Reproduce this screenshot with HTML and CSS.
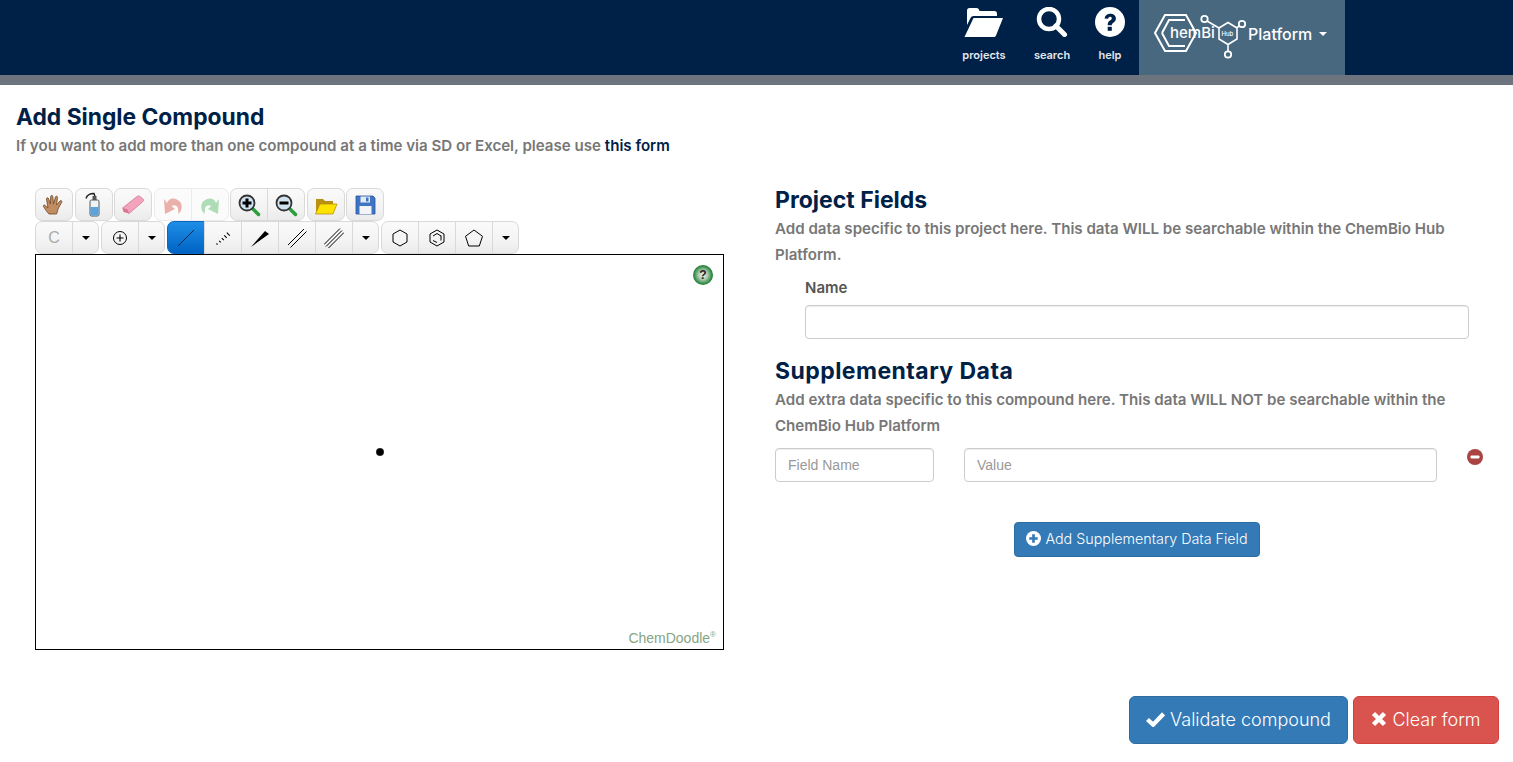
FILE: index.html
```html
<!DOCTYPE html>
<html lang="en">
<head>
  <meta charset="UTF-8">
  <title>Add Single Compound</title>
  <link rel="stylesheet" href="styles.css">
</head>
<body>
  <header class="topbar">
    <a class="nav-item nav-projects">
      <svg width="40" height="30" viewBox="0 0 40 30"><path d="M3 9V3.500C3 2 4 1 5.500 1h7c1.500 0 2.500 1 3 3h15c1.500 0 2.500 1 2.500 2.500V9H9.500C8 9 7.200 9.800 6.500 11L3 18z" fill="#fff"/><path d="M9.500 11H39l-7 17.500c-.3.800-1 1.500-2 1.500H.5z" fill="#fff"/></svg>
      <span>projects</span>
    </a>
    <a class="nav-item nav-search">
      <svg width="32" height="30" viewBox="0 0 32 30"><circle cx="13" cy="12" r="10" fill="none" stroke="#fff" stroke-width="4.500"/><path d="M20 19l8.500 8.500" stroke="#fff" stroke-width="5" stroke-linecap="round"/></svg>
      <span>search</span>
    </a>
    <a class="nav-item nav-help">
      <svg width="30" height="30" viewBox="0 0 30 30"><circle cx="15" cy="15" r="15" fill="#fff"/><path d="M9.500 11.500C10 8.500 12.300 6.800 15.300 6.800c3.200 0 5.600 2 5.600 4.800 0 2.300-1.300 3.300-2.800 4.300-1 .7-1.300 1.200-1.300 2.300h-4.100c0-2.400.7-3.600 2.300-4.700 1.200-.8 1.800-1.300 1.800-2.100 0-1-.7-1.600-1.600-1.600-1.100 0-1.800.7-2 1.900z" fill="#002147"/><rect x="12.700" y="19.800" width="4.100" height="4" fill="#002147"/></svg>
      <span>help</span>
    </a>
    <a class="platform">
      <svg class="logo" width="92" height="50" viewBox="0 0 92 50">
        <g fill="none" stroke="#fff">
          <path d="M1 21L11 3H32L42 21 32 39H11z" stroke-width="2"/>
          <path d="M8 21L15 8H31M31 34H15L8 21" stroke-width="2"/>
          <path d="M53 9L65 16M65 16l9-5.500 9 5.500V27l-9 5.500-9-5.500zM83 15.500l3-2M74 32.500V39" stroke-width="1.600"/>
          <circle cx="50.500" cy="7" r="3.200" stroke-width="1.800"/>
          <circle cx="88" cy="12" r="3.200" stroke-width="1.800"/>
          <circle cx="74" cy="42.500" r="3.200" stroke-width="1.800"/>
        </g>
        <text x="16" y="26" class="logo-text">hemBi</text>
        <text x="67.500" y="24" class="logo-hub">Hub</text>
      </svg>
      <span>Platform</span>
      <i class="caret caret-white"></i>
    </a>
  </header>
  <div class="subbar"></div>

  <div class="page-head">
    <h1>Add Single Compound</h1>
    <p>If you want to add more than one compound at a time via SD or Excel, please use <a>this form</a></p>
  </div>

  <div class="columns">
    <div class="sketcher">
      <div class="tool-row row-top">
        <button class="tool">
          <svg width="24" height="24" viewBox="0 0 24 24"><path d="M7 21c-2-2-4-5-5.500-7.500-.6-1 .8-2 1.700-1L6 15 4.500 6c-.2-1.300 1.700-1.700 2-.4L8.500 11 8.700 3.500c0-1.400 2-1.400 2.100 0L11.500 11l2-7c.3-1.300 2.200-.9 2 .4L14.500 12l3.500-4c.9-1 2.400 0 1.700 1.200L16.500 15c-.8 1.500-1 4-2 6z" fill="#c08d62" stroke="#6e4526" stroke-width=".8"/></svg>
        </button>
        <button class="tool">
          <svg width="24" height="26" viewBox="0 0 24 26"><path d="M4 6.500C5 3 8 1.500 12 1.500l1 3" fill="none" stroke="#222" stroke-width="1.400"/><rect x="10.500" y="4" width="4" height="4" fill="#555"/><rect x="8" y="8" width="9" height="16" rx="1.500" fill="#eef3f6" stroke="#555"/><rect x="8.500" y="15" width="8" height="8.500" fill="#5aa3dc"/></svg>
        </button>
        <button class="tool">
          <svg width="24" height="24" viewBox="0 0 24 24"><path d="M1.500 15L16 3.500c1-.8 2-.8 3 0l3 2.500c.9.800.8 1.800 0 2.500L8 20.500z" fill="#f3a3bb" stroke="#c7718c" stroke-width=".7"/><path d="M1.500 15l5 1.500 1.500 4L2.500 19z" fill="#d9748f"/></svg>
        </button>
        <div class="tool-group">
          <button class="tool faded">
            <svg width="24" height="24" viewBox="0 0 24 24"><path d="M3 6l1 15 10-5-3.500-3c2.500-1.500 5.500-1 6.500 2l.5 6c5-5 4-12-1.500-14.500-4.500-2-8-1-10 3.500z" fill="#eab1aa"/></svg>
          </button>
          <button class="tool faded">
            <svg width="24" height="24" viewBox="0 0 24 24"><path d="M21 6l-1 15-10-5 3.500-3C11 11.500 8 12 7 15l-.5 6C1.500 16 2.500 9 8 6.500c4.500-2 8-1 10 3.500z" fill="#aedcb4"/></svg>
          </button>
        </div>
        <div class="tool-group">
          <button class="tool">
            <svg width="24" height="24" viewBox="0 0 24 24"><path d="M15 15l6.500 6.500" stroke="#2c9e3c" stroke-width="3.500" stroke-linecap="round"/><circle cx="10" cy="10" r="7.500" fill="#cfe2ee" stroke="#333" stroke-width="1.800"/><path d="M5.500 10h9M10 5.500v9" stroke="#000" stroke-width="3"/></svg>
          </button>
          <button class="tool">
            <svg width="24" height="24" viewBox="0 0 24 24"><path d="M15 15l6.500 6.500" stroke="#2c9e3c" stroke-width="3.500" stroke-linecap="round"/><circle cx="10" cy="10" r="7.500" fill="#cfe2ee" stroke="#333" stroke-width="1.800"/><path d="M5.500 10h9" stroke="#000" stroke-width="3"/></svg>
          </button>
        </div>
        <button class="tool">
          <svg width="24" height="24" viewBox="0 0 24 24"><path d="M2 19V6h7l2 2h8v4z" fill="#b89112"/><path d="M6 11h17l-4 10H1.500z" fill="#fce300" stroke="#b89112" stroke-width=".8"/></svg>
        </button>
        <button class="tool">
          <svg width="24" height="24" viewBox="0 0 24 24"><path d="M3 3h17l2 2v16H3z" fill="#3f74c4" stroke="#2a5496" stroke-width=".8"/><rect x="7.500" y="3.500" width="9.500" height="6" fill="#e4e9f2"/><rect x="13" y="4.500" width="2.500" height="4" fill="#3f74c4"/><rect x="6.500" y="13" width="12" height="8" fill="#f2f4f8"/></svg>
        </button>
      </div>
      <div class="tool-row">
        <div class="tool-group">
          <button class="tool tool-atom">C</button>
          <button class="tool tool-arrow"><i class="caret"></i></button>
        </div>
        <div class="tool-group">
          <button class="tool">
            <svg width="16" height="16" viewBox="0 0 16 16"><circle cx="8" cy="8" r="6.500" fill="none" stroke="#000"/><path d="M4.500 8h7M8 4.500v7" stroke="#000" stroke-width="1.100"/></svg>
          </button>
          <button class="tool tool-arrow"><i class="caret"></i></button>
        </div>
        <div class="tool-group">
          <button class="tool tool-on">
            <svg width="20" height="20" viewBox="0 0 20 20"><path d="M2 18L18 2" stroke="#06274d" stroke-width="1"/></svg>
          </button>
          <button class="tool">
            <svg width="20" height="20" viewBox="0 0 20 20"><path d="M3.500 15.500l1 1M6.200 12.800l1.500 1.500M8.800 10.200l2 2M11.200 7.300l2.500 2.500M13.800 4.700l3 3" stroke="#000" stroke-width="1.100"/></svg>
          </button>
          <button class="tool">
            <svg width="20" height="20" viewBox="0 0 20 20"><path d="M1 19L15 3l4 3z"/></svg>
          </button>
          <button class="tool">
            <svg width="20" height="20" viewBox="0 0 20 20"><path d="M1 17L17 1M3.500 19.500L19.500 3.500" stroke="#000"/></svg>
          </button>
          <button class="tool">
            <svg width="20" height="20" viewBox="0 0 20 20"><path d="M0 16.500L16 .5M2 18.500L18 2.500M4 20.500L20 4.500" stroke="#000"/></svg>
          </button>
          <button class="tool tool-arrow"><i class="caret"></i></button>
        </div>
        <div class="tool-group">
          <button class="tool">
            <svg width="18" height="18" viewBox="0 0 18 18"><path d="M9 1l7 4v8l-7 4-7-4V5z" fill="none" stroke="#000"/></svg>
          </button>
          <button class="tool">
            <svg width="18" height="18" viewBox="0 0 18 18"><path d="M9 1l7 4v8l-7 4-7-4V5zM5 7l4-2.500 4 2.500M5 11.500l4 2M13 6.500v5" fill="none" stroke="#000"/></svg>
          </button>
          <button class="tool">
            <svg width="20" height="20" viewBox="0 0 20 20"><path d="M10 2l8.500 6.300L15.300 18H4.700L1.500 8.300z" fill="none" stroke="#000"/></svg>
          </button>
          <button class="tool tool-arrow"><i class="caret"></i></button>
        </div>
      </div>
      <div class="canvas">
        <span class="canvas-help">?</span>
        <span class="canvas-dot"></span>
        <span class="canvas-mark">ChemDoodle<sup>®</sup></span>
      </div>
    </div>

    <div class="fields">
      <h2>Project Fields</h2>
      <p class="hint">Add data specific to this project here. This data WILL be searchable within the ChemBio Hub Platform.</p>
      <div class="name-field">
        <label>Name</label>
        <input class="text-input" type="text">
      </div>
      <h2 class="second">Supplementary Data</h2>
      <p class="hint">Add extra data specific to this compound here. This data WILL NOT be searchable within the ChemBio Hub Platform</p>
      <div class="supp-row">
        <input class="text-input" type="text" placeholder="Field Name">
        <input class="text-input" type="text" placeholder="Value">
        <svg class="minus" width="16" height="16" viewBox="0 0 16 16"><circle cx="8" cy="8" r="8" fill="#a94442"/><rect x="3.500" y="6.500" width="9" height="3" rx="1" fill="#fff"/></svg>
      </div>
      <div class="add-row">
        <button class="btn btn-add">
          <svg width="15" height="15" viewBox="0 0 16 16"><circle cx="8" cy="8" r="8" fill="#fff"/><path d="M8 3.500v9M3.500 8h9" stroke="#337ab7" stroke-width="2.800"/></svg>
          Add Supplementary Data Field
        </button>
      </div>
    </div>
  </div>

  <div class="actions">
    <button class="btn btn-big btn-primary">
      <svg width="19" height="16" viewBox="0 0 20 16"><path d="M1.500 8.500L7.500 14 18.500 2.500" fill="none" stroke="#fff" stroke-width="4.500"/></svg>
      Validate compound
    </button>
    <button class="btn btn-big btn-danger">
      <svg width="16" height="16" viewBox="0 0 16 16"><path d="M2.500 2.500l11 11M13.500 2.500l-11 11" stroke="#fff" stroke-width="4.500"/></svg>
      Clear form
    </button>
  </div>
</body>
</html>
```

FILE: styles.css
```css
* {
  box-sizing: border-box;
}
body {
  margin: 0;
  font-family: Inter, Lato, sans-serif;
  color: #333;
  background: #fff;
  overflow: hidden;
}
.topbar {
  height: 75px;
  background: #002147;
  display: flex;
  justify-content: flex-end;
  padding-right: 168px;
}
.nav-item {
  display: flex;
  flex-direction: column;
  align-items: center;
  color: #e4e8ee;
  font-size: 11px;
  font-weight: 600;
  padding-top: 7px;
}
.nav-item span {
  margin-top: 11px;
}
.nav-projects {
  width: 42px;
  margin-right: 29px;
}
.nav-search {
  width: 36px;
  margin-right: 25px;
}
.nav-help {
  width: 30px;
  margin-right: 14px;
}
.platform {
  width: 206px;
  background: #48687f;
  display: flex;
  align-items: center;
  padding: 0 0 7px 15px;
  color: #fff;
  font-size: 16px;
  font-weight: 500;
}
.logo {
  margin-top: 6px;
  margin-right: 2px;
  flex: none;
}
.logo-text {
  font-size: 15px;
  font-weight: 500;
  fill: #fff;
}
.logo-hub {
  font-size: 6px;
  fill: #fff;
}
.caret {
  display: inline-block;
  width: 0;
  height: 0;
  border-left: 4px solid transparent;
  border-right: 4px solid transparent;
  border-top: 4px solid #000;
}
.caret-white {
  border-top-color: #fff;
  margin-left: 7px;
}
.subbar {
  height: 10px;
  background: #6d747d;
}
.page-head {
  padding: 17px 16px 0;
  height: 103px;
}
.page-head h1 {
  margin: 0;
  font-size: 22.800px;
  line-height: 30px;
  font-weight: 700;
  color: #002147;
}
.page-head p {
  margin: 4px 0 0;
  font-size: 15.100px;
  line-height: 20px;
  font-weight: 600;
  color: #777;
}
.page-head a {
  color: #002147;
}
.columns {
  display: flex;
  height: 508px;
}
.sketcher {
  width: 775px;
  padding-left: 35px;
}
.tool-row {
  display: flex;
  gap: 2px;
  height: 33px;
}
.row-top {
  gap: 1.500px;
}
.tool-group {
  display: flex;
}
.tool {
  width: 38px;
  height: 33px;
  padding: 0;
  display: flex;
  align-items: center;
  justify-content: center;
  background: linear-gradient(to bottom, #fafafa 0%, #f4f4f4 55%, #ebebeb 100%);
  border: 1px solid #d9d9d9;
  border-radius: 7px;
}
.tool-group .tool {
  border-radius: 0;
  margin-left: -1px;
}
.tool-group .tool:first-child {
  border-radius: 7px 0 0 7px;
  margin-left: 0;
}
.tool-group .tool:last-child {
  border-radius: 0 7px 7px 0;
}
.faded {
  background: #fbfbfb;
  border-color: #ebebeb;
}
.tool-atom {
  font-family: "Liberation Sans", sans-serif;
  font-size: 16px;
  color: #aaa;
}
.tool-arrow {
  width: 27px;
}
.tool-on {
  background: linear-gradient(to bottom, #1e8ee6 0%, #0063c4 100%);
  border-color: #0a66c2;
}
.canvas {
  position: relative;
  width: 689px;
  height: 396px;
  border: 1px solid #000;
}
.canvas-help {
  position: absolute;
  top: 10px;
  right: 10px;
  width: 20px;
  height: 20px;
  border-radius: 50%;
  background: radial-gradient(circle, #eef3ee 0%, #b5cfb8 30%, #1f8035 68%, #14612a 100%);
  font: bold 12px/20px "Liberation Sans", sans-serif;
  text-align: center;
  color: #222;
}
.canvas-dot {
  position: absolute;
  left: 340px;
  top: 193px;
  width: 8px;
  height: 8px;
  border-radius: 50%;
  background: radial-gradient(circle, #000 50%, #888 100%);
}
.canvas-mark {
  position: absolute;
  right: 7px;
  bottom: 3px;
  font: 14px "Liberation Sans", sans-serif;
  color: #86a586;
}
.canvas-mark sup {
  font-size: 8px;
  line-height: 0;
}
.fields {
  width: 694px;
}
.fields h2 {
  margin: 0;
  font-size: 23px;
  line-height: 24px;
  font-weight: 700;
  color: #002147;
}
.fields h2.second {
  margin-top: 20px;
  letter-spacing: 0.450px;
}
.hint {
  margin: 4px 0 0;
  font-size: 15.100px;
  line-height: 26px;
  font-weight: 600;
  color: #777;
}
.name-field {
  padding-left: 30px;
  margin-top: 10px;
}
.name-field label {
  display: block;
  font-size: 15px;
  line-height: 20px;
  font-weight: 600;
  color: #555;
  margin-bottom: 7px;
}
.text-input {
  display: block;
  height: 34px;
  width: 100%;
  padding: 6px 12px;
  border: 1px solid #ccc;
  border-radius: 4px;
  font-family: "Liberation Sans", sans-serif;
  font-size: 14px;
  box-shadow: inset 0 1px 1px rgba(0, 0, 0, 0.075);
}
.text-input::placeholder {
  color: #999;
}
.supp-row {
  display: flex;
  align-items: flex-start;
  margin-top: 9px;
}
.supp-row .text-input:nth-child(1) {
  width: 159px;
  margin-right: 30px;
  flex: none;
}
.supp-row .text-input:nth-child(2) {
  width: 473px;
  margin-right: 30px;
  flex: none;
}
.minus {
  margin-top: 1px;
  flex: none;
}
.add-row {
  display: flex;
  justify-content: center;
  margin-top: 40px;
  padding-left: 30px;
  width: 694px;
}
.btn {
  display: inline-flex;
  align-items: center;
  justify-content: center;
  gap: 4px;
  font-family: Inter, Lato, sans-serif;
  font-weight: 300;
  font-size: 14.300px;
  color: #fff;
  border-radius: 4px;
  border: 1px solid #2e6da4;
  background: #337ab7;
}
.btn-add {
  width: 246px;
  height: 35px;
  padding: 0 0 2px;
}
.actions {
  display: flex;
  justify-content: flex-end;
  gap: 5px;
  padding-right: 14px;
}
.btn-big {
  height: 48px;
  padding: 0 0 2px;
  font-size: 18px;
  border-radius: 6px;
  gap: 5px;
}
.btn-primary {
  width: 219px;
}
.btn-danger {
  width: 146px;
  background: #d9534f;
  border-color: #d43f3a;
}
```
